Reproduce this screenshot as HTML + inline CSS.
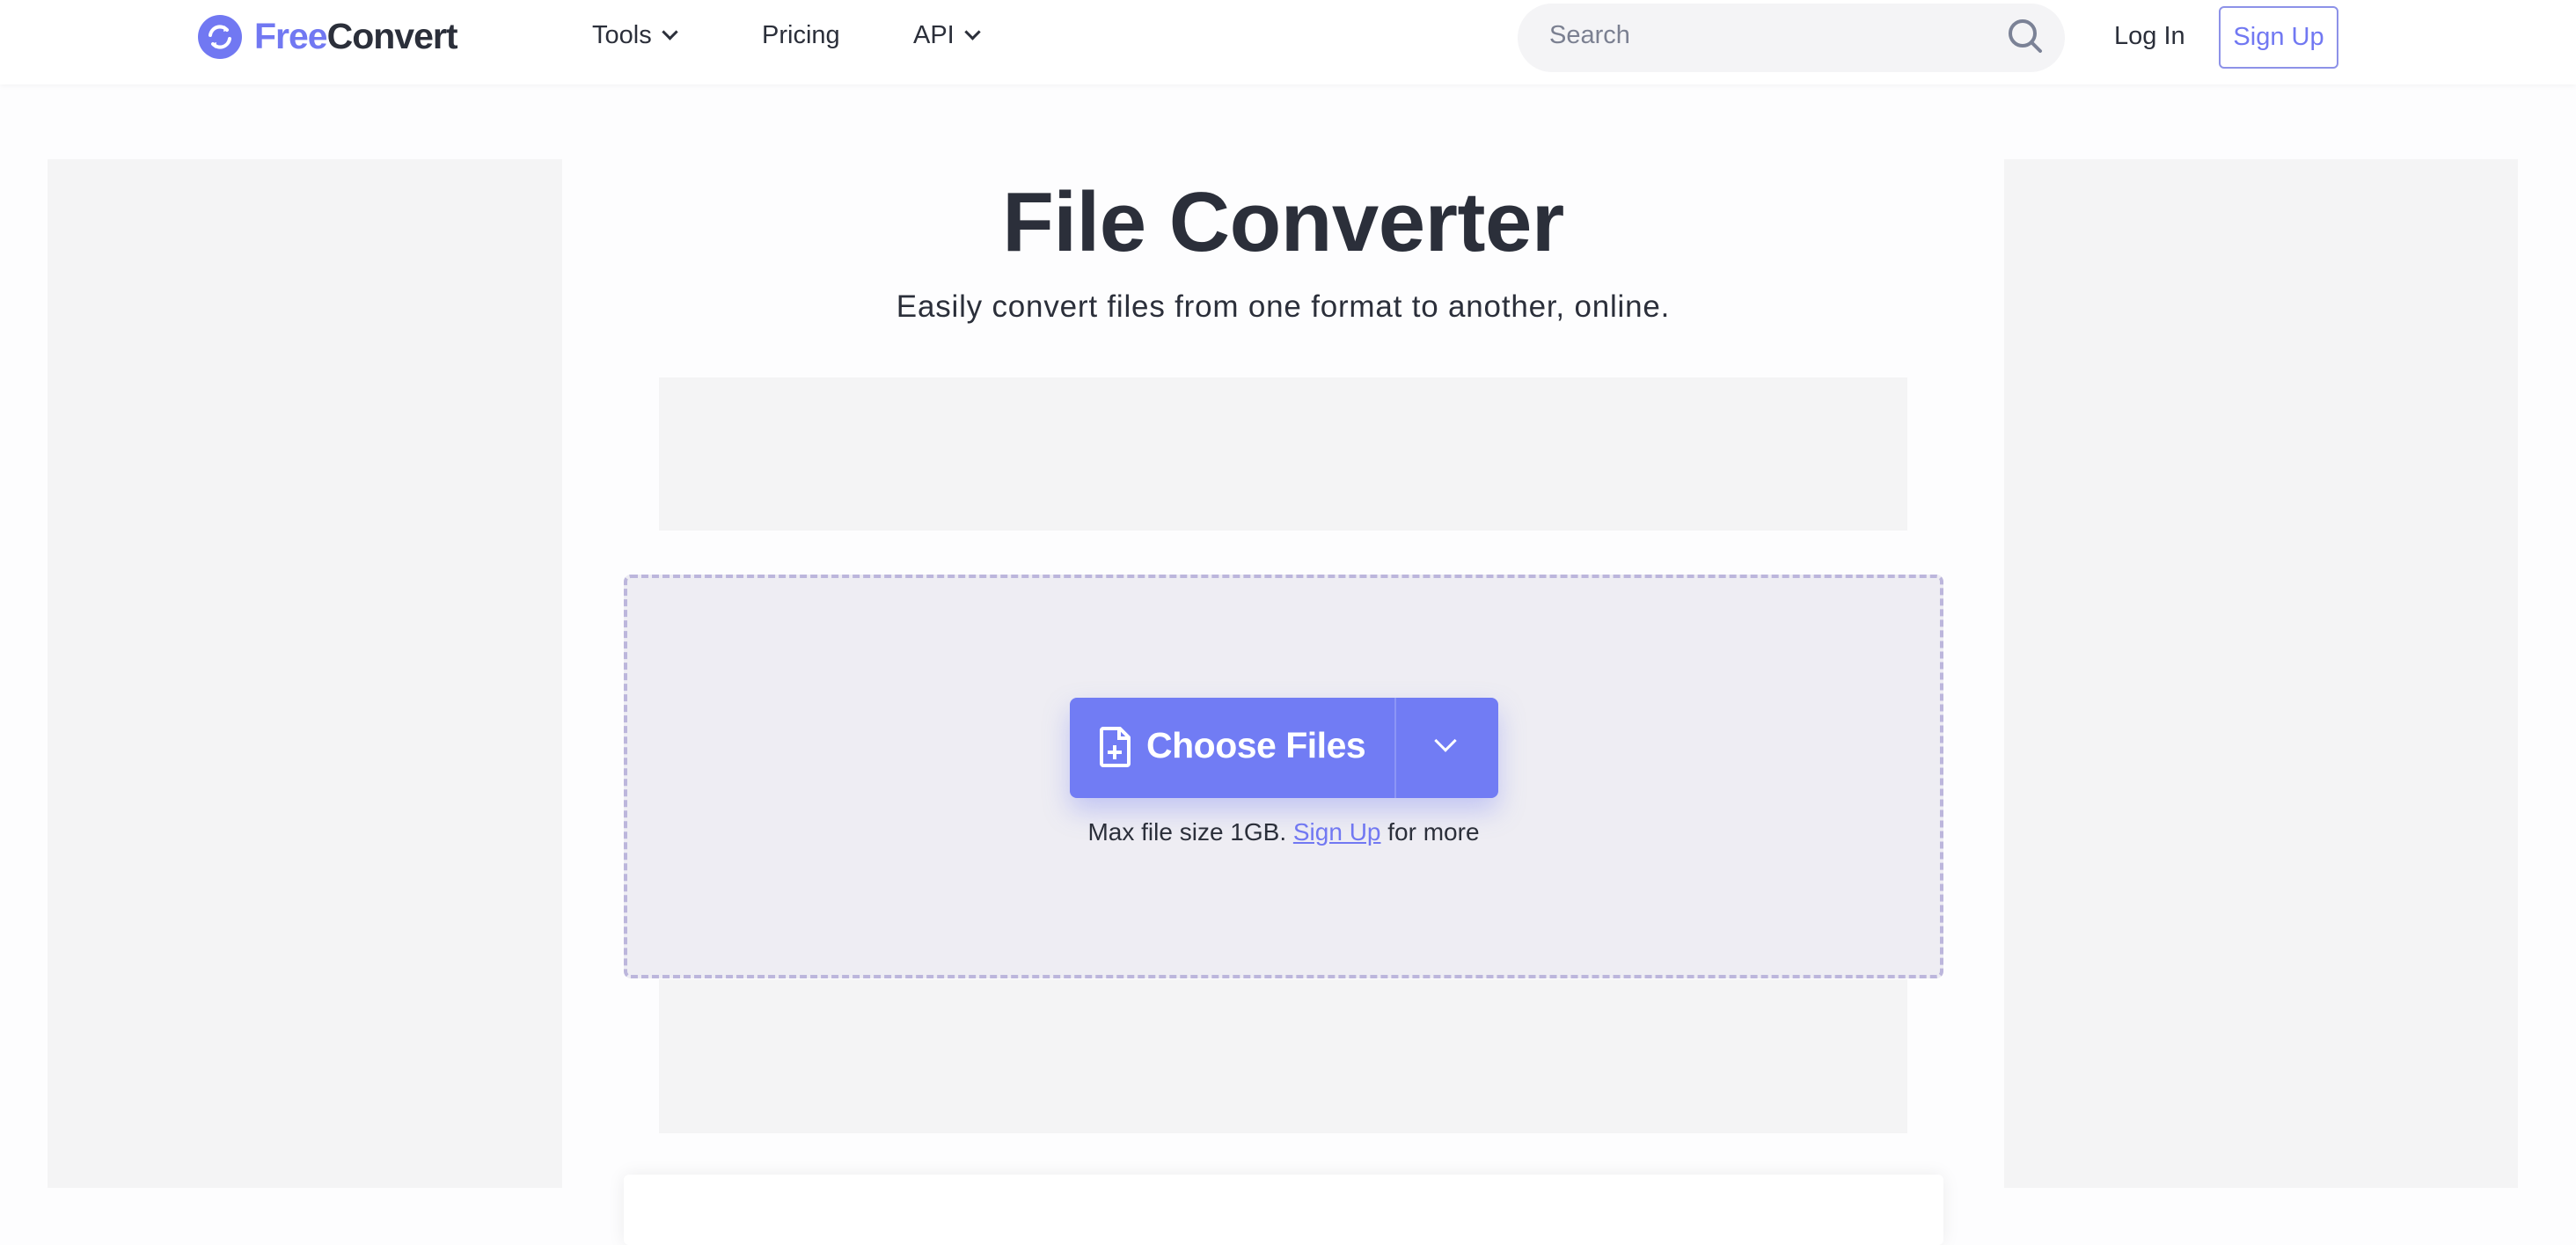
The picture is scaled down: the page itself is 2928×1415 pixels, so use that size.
<!DOCTYPE html>
<html><head><meta charset="utf-8">
<style>
*{margin:0;padding:0;box-sizing:border-box}
html,body{width:2928px;height:1393px;overflow:hidden;background:#fdfdfe;font-family:"Liberation Sans",sans-serif;color:#2b2f3a}
.hdr{position:absolute;left:0;top:0;width:2928px;height:96px;background:#fff;box-shadow:0 2px 6px rgba(0,0,0,.04)}
.abs{position:absolute}
.nav{font-size:29px;color:#2b2f3a;top:24px}
.chev{display:inline-block;width:13px;height:13px;border-right:3px solid #2b2f3a;border-bottom:3px solid #2b2f3a;transform:rotate(45deg);margin-left:14px;position:relative;top:-6px}
.panel{background:#f4f4f5}
</style></head><body>
<div class="hdr">
  <svg class="abs" style="left:225px;top:17px" width="50" height="50" viewBox="0 0 50 50">
    <circle cx="25" cy="25" r="25" fill="#7178f2"/>
    <path d="M14 23a11 11 0 0 1 19-6" stroke="#fff" stroke-width="4" fill="none" stroke-linecap="round"/>
    <path d="M30 12l5 5-6 2z" fill="#fff"/>
    <path d="M36 27a11 11 0 0 1-19 6" stroke="#fff" stroke-width="4" fill="none" stroke-linecap="round"/>
    <path d="M20 38l-5-5 6-2z" fill="#fff"/>
  </svg>
  <div class="abs" style="left:289px;top:18px;font-size:41px;font-weight:bold;letter-spacing:-1px"><span style="color:#7178f2">Free</span><span style="color:#2b2f3a">Convert</span></div>
  <div class="abs nav" style="left:673px">Tools<span class="chev"></span></div>
  <div class="abs nav" style="left:866px">Pricing</div>
  <div class="abs nav" style="left:1038px">API<span class="chev"></span></div>
  <div class="abs" style="left:1725px;top:4px;width:622px;height:78px;border-radius:39px;background:#f4f4f6"></div>
  <div class="abs" style="left:1761px;top:24px;font-size:29px;color:#7b8091">Search</div>
  <svg class="abs" style="left:2280px;top:19px" width="44" height="44" viewBox="0 0 44 44"><circle cx="19" cy="19" r="14" stroke="#7b8296" stroke-width="4" fill="none"/><path d="M29 29l10 10" stroke="#7b8296" stroke-width="4" stroke-linecap="round"/></svg>
  <div class="abs nav" style="left:2403px;top:25px">Log In</div>
  <div class="abs" style="left:2522px;top:7px;width:136px;height:71px;border:2px solid #8d92e8;border-radius:6px;font-size:29px;color:#7178f2;text-align:center;line-height:67px">Sign Up</div>
</div>
<div class="abs panel" style="left:54px;top:181px;width:585px;height:1169px"></div>
<div class="abs panel" style="left:2278px;top:181px;width:584px;height:1169px"></div>
<div class="abs" style="left:639px;top:198px;width:1639px;text-align:center;font-size:96px;font-weight:bold;color:#2b2f3a;letter-spacing:-0.5px">File Converter</div>
<div class="abs" style="left:639px;top:329px;width:1639px;text-align:center;font-size:35px;color:#2b2f3a;letter-spacing:0.8px">Easily convert files from one format to another, online.</div>
<div class="abs panel" style="left:749px;top:429px;width:1419px;height:174px"></div>
<div class="abs" style="left:709px;top:653px;width:1500px;height:459px;background:#eeedf3;border:4px dashed #bcb6dc;border-radius:8px"></div>
<div class="abs" style="left:1216px;top:793px;width:487px;height:114px;background:#717cf4;border-radius:8px;box-shadow:0 14px 30px rgba(113,124,244,.35)"></div>
<div class="abs" style="left:1585px;top:793px;width:2px;height:114px;background:#8c95f6"></div>
<svg class="abs" style="left:1249px;top:825px" width="38" height="48" viewBox="0 0 38 48"><path d="M5 3h19l10 10v30a2 2 0 0 1-2 2H5a2 2 0 0 1-2-2V5a2 2 0 0 1 2-2z" stroke="#fff" stroke-width="4" fill="none" stroke-linejoin="round"/><path d="M23 3v11h11" stroke="#fff" stroke-width="4" fill="none"/><path d="M18 22v16M10 30h16" stroke="#fff" stroke-width="4"/></svg>
<div class="abs" style="left:1303px;top:824px;font-size:41px;font-weight:bold;color:#fff;letter-spacing:-0.5px">Choose Files</div>
<div class="abs" style="left:1634px;top:833px;width:18px;height:18px;border-right:3px solid #fff;border-bottom:3px solid #fff;transform:rotate(45deg)"></div>
<div class="abs" style="left:709px;top:930px;width:1500px;text-align:center;font-size:28px;color:#2b2f3a">Max file size 1GB. <span style="color:#7178f2;text-decoration:underline">Sign Up</span> for more</div>
<div class="abs panel" style="left:749px;top:1113px;width:1419px;height:175px"></div>
<div class="abs" style="left:709px;top:1335px;width:1500px;height:80px;background:#fff;box-shadow:0 0 20px rgba(0,0,0,.07);border-radius:6px"></div>
</body></html>
